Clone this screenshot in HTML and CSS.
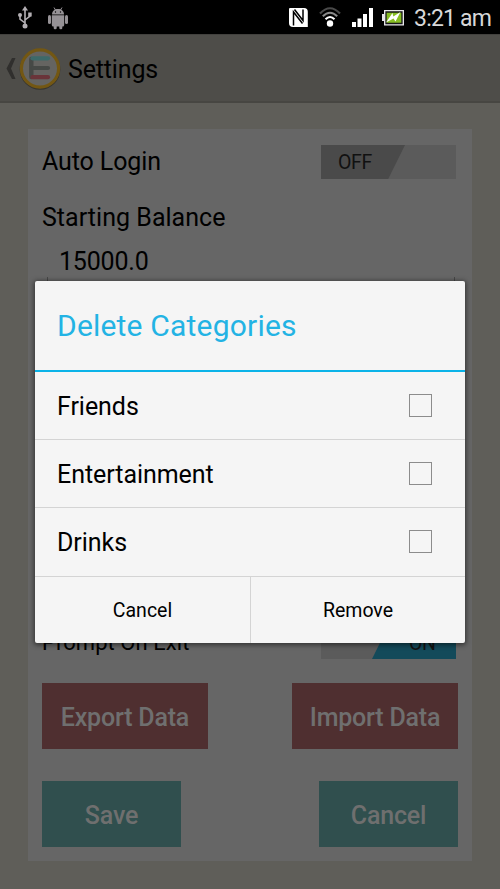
FILE: index.html
```html
<!DOCTYPE html>
<html lang="en">
<head>
<meta charset="utf-8">
<title>Settings</title>
<link rel="stylesheet" href="styles.css">
</head>
<body>
<div class="screen">
  <header class="status">
    <svg class="usb" width="14" height="24" viewBox="0 0 14 24" fill="none" stroke="#b3afb3" stroke-width="1.6"><path d="M7 3v17M7 17l-5-4V9M7 14l5-4V7"/><path d="M7 0l3 4.500H4z" fill="#b3afb3" stroke="none"/><circle cx="2" cy="9" r="2" fill="#b3afb3" stroke="none"/><path d="M10.200 6.500h3.500v4h-3.500z" fill="#b3afb3" stroke="none"/><circle cx="7" cy="20" r="2.500" fill="#b3afb3" stroke="none"/></svg>
    <svg class="droid" width="20" height="23" viewBox="0 0 20 23" fill="#969296"><path d="M4 7.500C4 4 6.500 2 10 2s6 2 6 5.500z"/><path d="M6 .5l1.500 2.500M14 .5L12.500 3" stroke="#969296"/><path d="M3.800 8.300h12.400v9.700a1.500 1.500 0 0 1-1.500 1.500h-9.400A1.500 1.500 0 0 1 3.800 18z"/><rect x="0" y="8" width="3" height="9" rx="1.500"/><rect x="17" y="8" width="3" height="9" rx="1.500"/><rect x="5.700" y="17" width="3" height="5.200" rx="1.300"/><rect x="11.300" y="17" width="3" height="5.200" rx="1.300"/><circle cx="7.500" cy="5" r=".7" fill="#000"/><circle cx="12.500" cy="5" r=".7" fill="#000"/></svg>
    <svg class="nfc" width="19" height="19" viewBox="0 0 19 19"><path d="M1 0h14q3.800 0 3.800 4v15H4Q0 19 0 15V1q0-1 1-1z" fill="#fff"/><path d="M4.500 17.500V4l9 11.500M5.500 1.500l8.500 11V1.500" stroke="#000" stroke-width="1.500" fill="none"/></svg>
    <svg class="wifi" width="22" height="20" viewBox="0 0 22 20" fill="none"><path d="M1 6.500Q11-4 21 6.500" stroke="#4a4a4a" stroke-width="2.200"/><path d="M3.800 9.300Q11 2 18.200 9.300" stroke="#8a8a8a" stroke-width="2"/><path d="M6.500 12.300Q11 7.500 15.500 12.300" stroke="#fff" stroke-width="2"/><circle cx="11" cy="16.500" r="3.200" fill="#fff"/></svg>
    <svg class="signal" width="21" height="19" viewBox="0 0 21 19" fill="#fff"><path d="M0 14h4v5H0zM5.500 10.500h4V19h-4zM11 6h4v13h-4zM17 0h4v19h-4z"/></svg>
    <svg class="battery" width="22" height="17" viewBox="0 0 22 17"><path d="M0 5h2V1h20v15.500H2V12H0z" fill="#e8e6ea"/><path d="M4 3h16v11.500H4z" fill="#86bd22" stroke="#171717" stroke-width="1.300"/><path d="M4 13.500l6.500-9.500.8 3.500L18.500 3l-5 9.500-2-3z" fill="#fff"/></svg>
    <span class="clock">3:21 am</span>
  </header>
  <nav class="bar">
    <svg class="back" width="10" height="21" viewBox="0 0 10 21"><path d="M6 0h3.500L5 10.500 9.500 21H6L.5 10.500z" fill="#302f2d"/></svg>
    <svg class="logo" width="42" height="43" viewBox="0 0 42 43"><circle cx="21" cy="21.500" r="20.300" fill="#353430"/><circle cx="21" cy="20.500" r="18.600" fill="#656461" stroke="#735713" stroke-width="3.200"/><path d="M12.300 11v18" stroke="#464946" stroke-width="4.400" stroke-linecap="round"/><path d="M14 20h15" stroke="#464946" stroke-width="4.200" stroke-linecap="round"/><path d="M13.500 10.300h15.500" stroke="#3d6968" stroke-width="4.200" stroke-linecap="round"/><path d="M13.500 29.200h15.500" stroke="#6a3439" stroke-width="4.200" stroke-linecap="round"/></svg>
    <h1 class="title">Settings</h1>
  </nav>
  <main class="panel">
    <div class="row"><span class="label auto">Auto Login</span><div class="toggle"><div class="off"></div><span class="toggle-text">OFF</span></div></div>
    <div class="label balance">Starting Balance</div>
    <div class="amount">15000.0</div>
    <div class="field-base"></div>
    <div class="row exit"><span class="label prompt">Prompt On Exit</span><div class="toggle"><div class="on"></div><span class="toggle-text on-text">ON</span></div></div>
    <div class="row data"><div class="btn red"><span>Export Data</span></div><div class="btn red"><span>Import Data</span></div></div>
    <div class="row actions"><div class="btn teal"><span class="save">Save</span></div><div class="btn teal"><span>Cancel</span></div></div>
  </main>
  <section class="dialog">
    <h2 class="dialog-title"><span>Delete Categories</span></h2>
    <div class="item"><span>Friends</span><i class="check"></i></div>
    <div class="item"><span>Entertainment</span><i class="check"></i></div>
    <div class="item last"><span>Drinks</span><i class="check"></i></div>
    <div class="dialog-actions"><div class="choice first"><span>Cancel</span></div><div class="choice"><span>Remove</span></div></div>
  </section>
</div>
</body>
</html>
```
FILE: styles.css
```css
* { box-sizing: border-box; }
body { margin: 0; font-family: Roboto, sans-serif; color: #000; background: #5f5e59; }
.screen { position: relative; width: 500px; height: 889px; overflow: hidden; background: #5f5e59; }
.status { height: 34px; background: #000; display: flex; align-items: flex-start; }
.status svg { flex: none; }
.usb { margin: 6px 0 0 18px; }
.droid { margin: 7px 0 0 16px; }
.nfc { margin: 8px 0 0 221px; }
.wifi { margin: 7px 0 0 11px; }
.signal { margin: 8px 0 0 11px; }
.battery { margin: 9px 0 0 9px; }
.clock { margin-left: 10px; line-height: 37px; font-size: 23px; letter-spacing: -0.8px; color: #d8d8d8; white-space: nowrap; }
.bar { height: 69px; display: flex; align-items: flex-start; background: #4e4d49; border-top: 1px solid #42413e; border-bottom: 2px solid #474642; }
.back { margin: 23px 0 0 6px; }
.logo { margin: 13px 0 0 3px; }
.title { margin: 0 0 0 7px; font-size: 25px; line-height: 69px; font-weight: 400; letter-spacing: -0.15px; }
.panel { margin: 26px 28px 0; height: 732px; padding: 16px 14px 0; background: #666; }
.row { display: flex; justify-content: space-between; }
.label { font-size: 25px; line-height: 34px; letter-spacing: -0.1px; }
.balance { margin-top: 22px; letter-spacing: 0.03px; }
.toggle { position: relative; width: 135px; height: 34px; margin-right: 2px; background: #5b5b5b; font-size: 19.5px; }
.off { height: 34px; width: 84px; background: #4a4a4a; clip-path: polygon(0 0, 100% 0, 80% 100%, 0 100%); }
.toggle-text { position: absolute; left: 17px; top: 0; line-height: 36px; color: #111; letter-spacing: -0.3px; }
.amount { height: 30px; margin-top: 12px; padding-left: 17px; font-size: 25px; line-height: 30px; letter-spacing: -0.2px; }
.field-base { height: 6px; margin: 0 3px 0 5px; border: 1px solid #484848; border-top: 0; }
.exit { margin-top: 342px; }
.prompt { font-size: 22px; line-height: 36px; height: 34px; letter-spacing: 0.05px; }
.on { height: 34px; margin-left: 51px; background: #134a5a; clip-path: polygon(20% 0, 100% 0, 100% 100%, 0 100%); }
.on-text { left: 88px; line-height: 38px; }
.data { margin-top: 24px; }
.actions { margin-top: 32px; }
.btn { height: 66px; padding-top: 2px; display: flex; align-items: center; justify-content: center; font-size: 25px; font-weight: 500; letter-spacing: -0.2px; color: #6f6f6f; }
.red { width: 166px; background: #4f2f30; }
.teal { width: 139px; background: #304f4e; }
.dialog { position: absolute; left: 35px; top: 281px; width: 430px; height: 362px; background: #f5f5f5; border-radius: 2px; box-shadow: 0 1px 5px 1px rgba(0,0,0,.5); overflow: hidden; }
.dialog-title { height: 91px; margin: 0; padding-left: 22px; border-bottom: 2px solid #0bb3e8; color: #23b3e4; font-size: 30px; font-weight: 400; line-height: 90px; letter-spacing: 0.2px; }
.item { height: 68px; display: flex; align-items: center; justify-content: space-between; padding: 0 33px 0 22px; border-bottom: 1px solid #d4d4d4; font-size: 25px; letter-spacing: -0.05px; }
.item span { padding-top: 2px; }
.check { width: 23px; height: 23px; border: 1px solid #8c8c8c; }
.last { height: 69px; padding-bottom: 1px; }
.dialog-actions { display: flex; height: 66px; }
.choice { width: 214px; display: flex; align-items: center; justify-content: center; padding-top: 1px; font-size: 19.5px; letter-spacing: 0; }
.first { width: 216px; border-right: 1px solid #d4d4d4; }
```
